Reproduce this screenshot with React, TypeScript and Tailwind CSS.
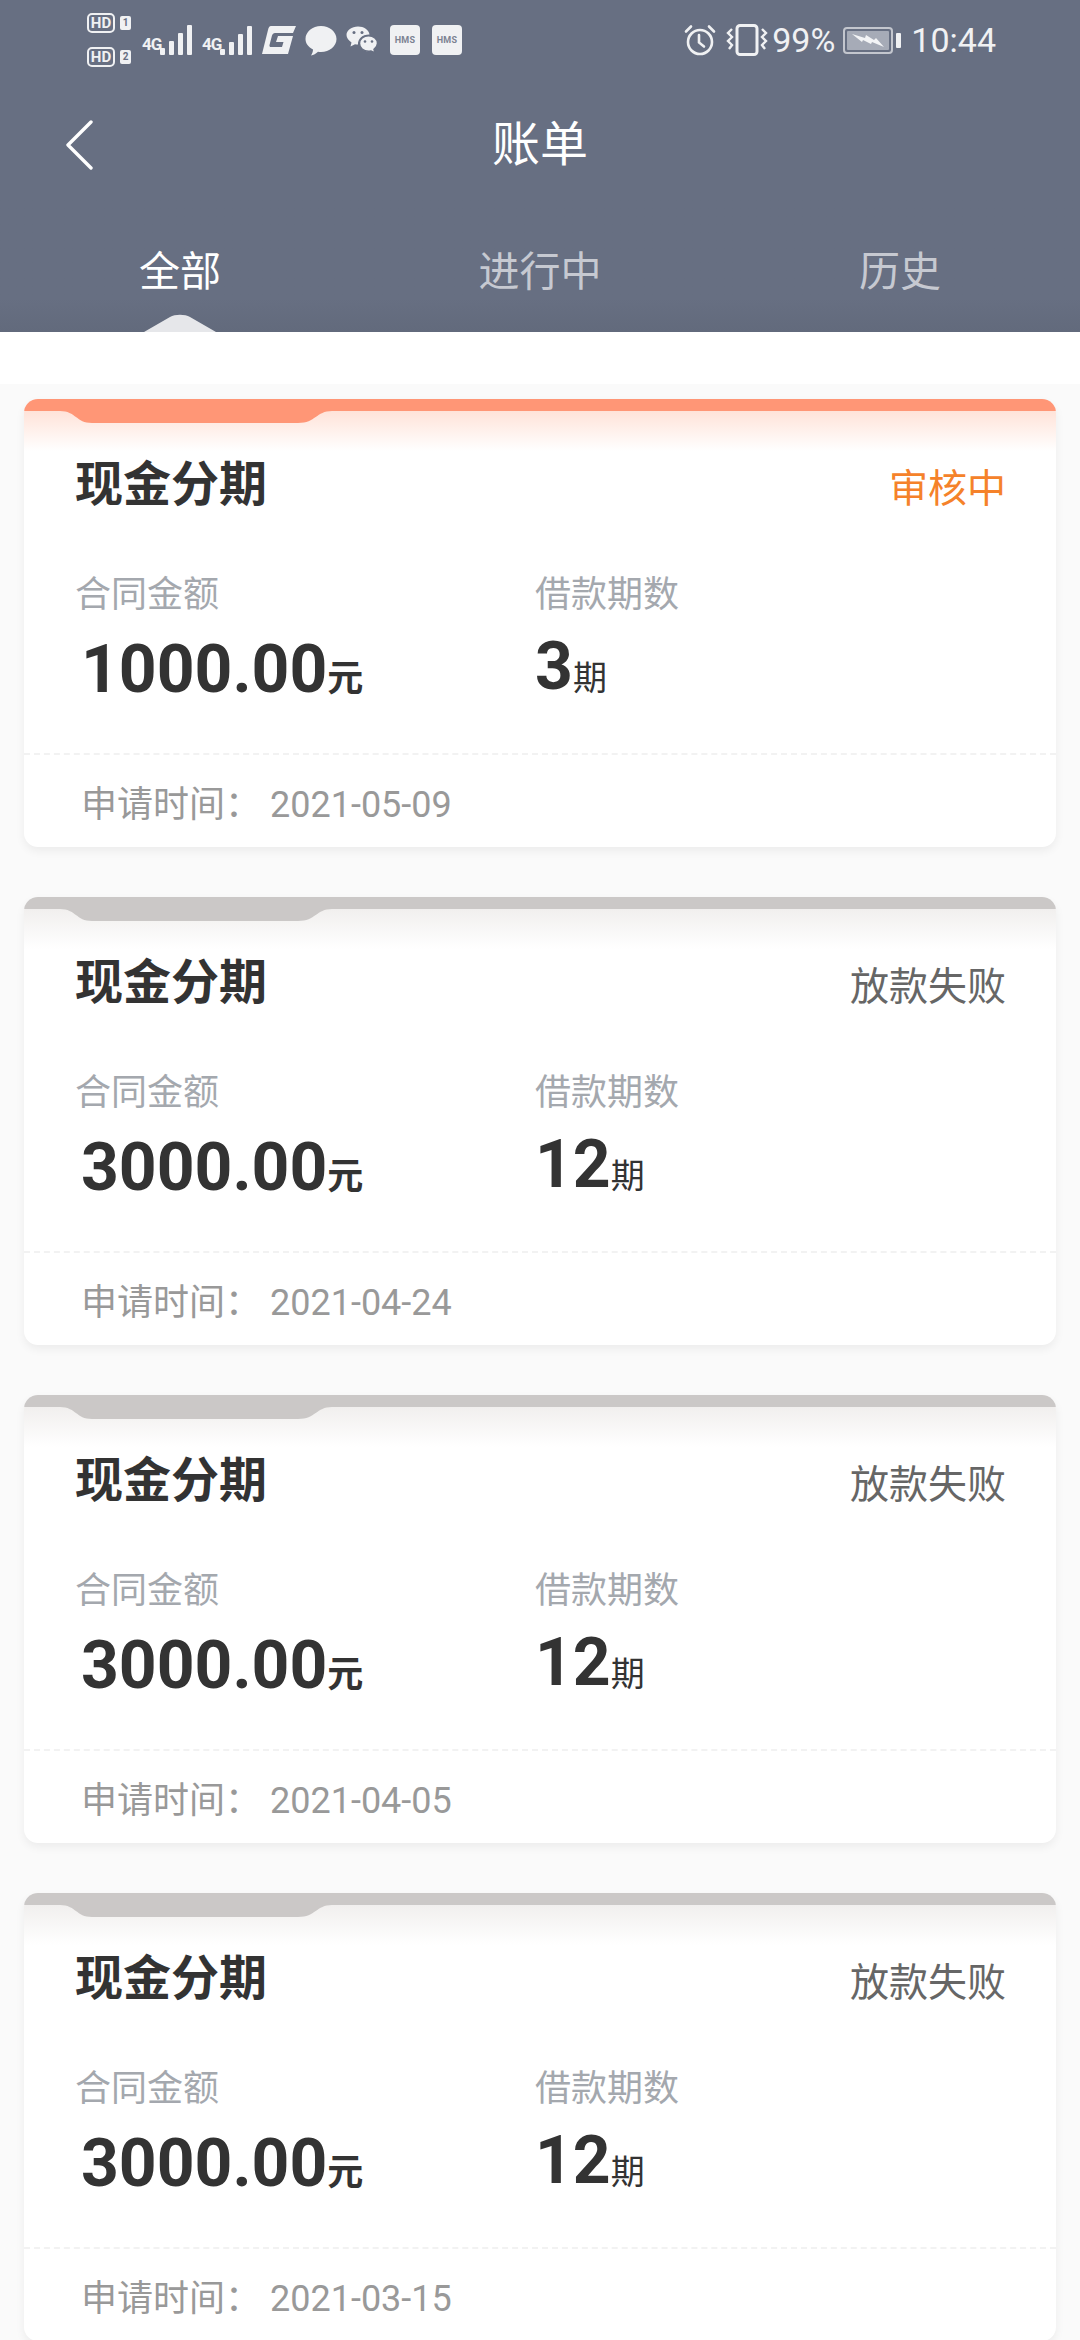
import React from 'react';

const bills = [
  { amount: '1000.00', months: '3', status: '审核中', date: '2021-05-09', active: true },
  { amount: '3000.00', months: '12', status: '放款失败', date: '2021-04-24', active: false },
  { amount: '3000.00', months: '12', status: '放款失败', date: '2021-04-05', active: false },
  { amount: '3000.00', months: '12', status: '放款失败', date: '2021-03-15', active: false },
];

function SignalBars({ dot }: { dot?: boolean }) {
  const bars = [7, 14, 22, 30];
  return (
    <div className="flex items-end gap-[4px] h-[30px]">
      {bars.map((h, i) => (
        <div key={i} className="w-[5px] rounded-[1px] bg-[#f0f1f3]" style={{ height: dot ? h - 1 : h }} />
      ))}
    </div>
  );
}

function HdBadge({ n }: { n: string }) {
  return (
    <div className="flex items-center gap-[5px] h-[20px]">
      <div className="w-[28px] h-[20px] rounded-[5px] border-[2px] border-[#f0f1f3] flex items-center justify-center text-[15px] leading-none font-bold text-[#f0f1f3]">
        HD
      </div>
      <div className="w-[11px] h-[14px] rounded-[2px] bg-[#f0f1f3] flex items-center justify-center text-[10px] leading-none font-bold text-[#676f82]">
        {n}
      </div>
    </div>
  );
}

function HmsIcon() {
  return (
    <div className="w-[30px] h-[30px] rounded-[4px] bg-[#f0f1f3] flex items-center justify-center text-[9px] leading-none font-bold tracking-[0.3px] text-[#7b8292]">
      HMS
    </div>
  );
}

function StatusBar() {
  return (
    <div className="h-[80px] pl-[87px] pr-[84px] flex items-center justify-between text-[#f0f1f3]">
      <div className="flex items-center">
        <div className="flex flex-col gap-[14px]">
          <HdBadge n="1" />
          <HdBadge n="2" />
        </div>
        <div className="ml-[11px] w-[18px] self-start mt-[23px] text-[17px] leading-[16px] font-bold tracking-[-1px]">4G</div>
        <div><SignalBars /></div>
        <div className="ml-[10px] w-[18px] self-start mt-[23px] text-[17px] leading-[16px] font-bold tracking-[-1px]">4G</div>
        <div><SignalBars dot /></div>
        <svg className="ml-[10px]" width="34" height="30" viewBox="0 0 34 30" fill="#f0f1f3">
          <path d="M9 1H34L31 8H13C11.500 8 10.500 9 10 10.500L7.500 20C7.200 21.500 8 22 9 22H20L21.500 17H14L16 11H31L26 29H0L6 5C6.500 2.500 7.500 1 9 1Z" />
        </svg>
        <svg className="ml-[9px]" width="32" height="31" viewBox="0 0 32 31" fill="#f0f1f3">
          <path d="M16 1C24.500 1 31.500 6.800 31.500 14C31.500 21.200 24.500 27 16 27C15 27 14 26.900 13 26.700C11 28.500 8.500 30 6 30.500C7.300 28.500 8 26.500 8 24.500C3.500 22.200 0.500 18.400 0.500 14C0.500 6.800 7.500 1 16 1Z" />
        </svg>
        <svg className="ml-[9px]" width="32" height="28" viewBox="0 0 32 28" fill="#f0f1f3">
          <path d="M12 0.500C18 0.500 22.800 4 23.500 8.500C17 8.300 11.700 12.300 12 18.500C11 18.500 10 18.400 9 18.200L4.500 20.500L5.500 16.500C2.500 14.500 0.500 11.700 0.500 9C0.500 4.300 5.700 0.500 12 0.500Z" />
          <path stroke="#676f82" strokeWidth="1.500" d="M22.500 9.800C27.500 9.800 31.500 13.200 31.500 17.300C31.500 19.700 30 21.800 28 23.300L29 27L25 25C24 25.200 23.300 25.300 22.500 25.300C17.500 25.300 13.500 21.800 13.500 17.500C13.500 13.200 17.500 9.800 22.500 9.800Z" />
          <circle cx="8" cy="6.500" r="1.500" fill="#676f82" />
          <circle cx="16" cy="6.500" r="1.500" fill="#676f82" />
          <circle cx="19" cy="15.500" r="1.300" fill="#676f82" />
          <circle cx="26" cy="15.500" r="1.300" fill="#676f82" />
        </svg>
        <div className="ml-[12px]"><HmsIcon /></div>
        <div className="ml-[12px]"><HmsIcon /></div>
      </div>
      <div className="flex items-center">
        <svg width="32" height="32" viewBox="0 0 32 32" fill="none" stroke="#f0f1f3" strokeWidth="2.600" strokeLinecap="round">
          <circle cx="16" cy="18" r="12" />
          <path d="M15 11V18.500L20 22.500" />
          <path d="M2 7.500L7 2.500M30 7.500L25 2.500" />
        </svg>
        <svg className="ml-[10px]" width="42" height="32" viewBox="0 0 42 32" fill="none" stroke="#f0f1f3" strokeWidth="2.400">
          <rect x="11" y="1.500" width="20" height="29" rx="3" strokeWidth="3" />
          <path d="M6 5L2 9L6 13L2 17L6 21L3 25M36 5L40 9L36 13L40 17L36 21L39 25" />
        </svg>
        <div className="ml-[4px] text-[34px] leading-none">99%</div>
        <div className="ml-[8px] flex items-center gap-[3px]">
          <div className="w-[50px] h-[27px] rounded-[4px] border-[2px] border-[#c3c6ce] p-[2px]">
            <div className="w-full h-full rounded-[1px] bg-[#a6abb7] flex items-center justify-center">
              <svg width="32" height="15" viewBox="0 0 32 15" fill="#f3f4f6">
                <path d="M0 1L13 5L14 2L22 7L24 5L32 14L20 9L19 11L11 7L10 9Z" />
              </svg>
            </div>
          </div>
          <div className="w-[5px] h-[15px] rounded-[1px] bg-[#f0f1f3]" />
        </div>
        <div className="ml-[10px] text-[34px] leading-none">10:44</div>
      </div>
    </div>
  );
}

function TopBar() {
  return (
    <div className="h-[332px] bg-gradient-to-b from-[#676f82] from-90% to-[#626a7c]">
      <StatusBar />
      <div className="h-[130px] pl-[62px] flex items-center">
        <svg width="34" height="50" viewBox="0 0 34 50" fill="none" stroke="#ffffff" strokeWidth="3.400" strokeLinecap="round" strokeLinejoin="round">
          <path d="M29 2L6 25L29 48" />
        </svg>
        <div className="flex-1 text-center pr-[96px] text-[48px] leading-none text-white">账单</div>
      </div>
      <div className="h-[122px] grid grid-cols-3">
        <Tab label="全部" active />
        <Tab label="进行中" />
        <Tab label="历史" />
      </div>
    </div>
  );
}

function Tab({ label, active }: { label: string; active?: boolean }) {
  return (
    <div className={`relative flex justify-center pt-[37px] text-[41px] leading-[50px] ${active ? 'text-white' : 'text-[#c6c9d1]'}`}>
      {label}
      {active && (
        <svg className="absolute bottom-0 left-1/2 -translate-x-1/2" width="72" height="18" viewBox="0 0 72 18" fill="#e6e7ea">
          <path d="M0 18L26 3C31 0 41 0 46 3L72 18Z" />
        </svg>
      )}
    </div>
  );
}

function BillCard({ bill }: { bill: (typeof bills)[number] }) {
  const stripColor = bill.active ? '#ff9676' : '#cbc8c7';
  return (
    <div className="relative ml-[24px] mr-[24px] h-[448px] shrink-0 bg-white rounded-[14px] overflow-hidden shadow-[0_4px_10px_rgba(0,0,0,0.06)]">
      <div className="h-[12px]" style={{ background: stripColor }} />
      <div
        className={`absolute top-[12px] inset-x-0 h-[40px] bg-gradient-to-b to-white ${bill.active ? 'from-[#ffe3d9]' : 'from-[#f1efee]'}`}
      />
      <svg className="absolute top-[11px] left-[36px]" width="272" height="13" viewBox="0 0 272 13" fill={stripColor}>
        <path d="M0 0H272V1C256 1 256 13 238 13H32C16 13 16 1 0 1Z" />
      </svg>
      <div className="relative pt-[33px] pl-[51px] pr-[50px] flex items-center justify-between h-[115px]">
        <div className="text-[48px] leading-[60px] font-bold text-[#333333]">现金分期</div>
        <div className={`mt-[7px] text-[39px] leading-[60px] ${bill.active ? 'text-[#f5822a]' : 'text-[#666666]'}`}>{bill.status}</div>
      </div>
      <div className="relative mt-[44px] pl-[51px] grid grid-cols-[460px_1fr] pb-[46px] border-b-[2px] border-dashed border-[#f2f2f2]">
        <div>
          <div className="text-[36px] leading-[50px] text-[#a4a8ae]">合同金额</div>
          <div className="mt-[10px] -mb-[3px] pl-[6px] h-[80px] flex items-end text-[#333333] font-bold">
            <span className="text-[66px] leading-[80px]">{bill.amount}</span>
            <span className="text-[36px] leading-[62px] font-bold">元</span>
          </div>
        </div>
        <div>
          <div className="text-[36px] leading-[50px] text-[#a4a8ae]">借款期数</div>
          <div className="mt-[7px] h-[80px] flex items-end text-[#333333] font-bold">
            <span className="text-[66px] leading-[80px]">{bill.months}</span>
            <span className="text-[34px] leading-[58px] font-normal">期</span>
          </div>
        </div>
      </div>
      <div className="relative pl-[57px] pt-[8px] flex items-center h-[92px] text-[36px] text-[#999999]">
        <span className="w-[189px]">申请时间：</span>
        <span>{bill.date}</span>
      </div>
    </div>
  );
}

export default function App() {
  return (
    <div className="w-[1080px] h-[2340px] overflow-hidden flex flex-col bg-white font-['Roboto','Noto_Sans_CJK_SC',sans-serif]">
      <TopBar />
      <div className="mt-[52px] flex-1 pt-[15px] bg-[#fafafa] flex flex-col gap-[50px]">
        {bills.map((b) => (
          <BillCard key={b.date} bill={b} />
        ))}
      </div>
    </div>
  );
}
